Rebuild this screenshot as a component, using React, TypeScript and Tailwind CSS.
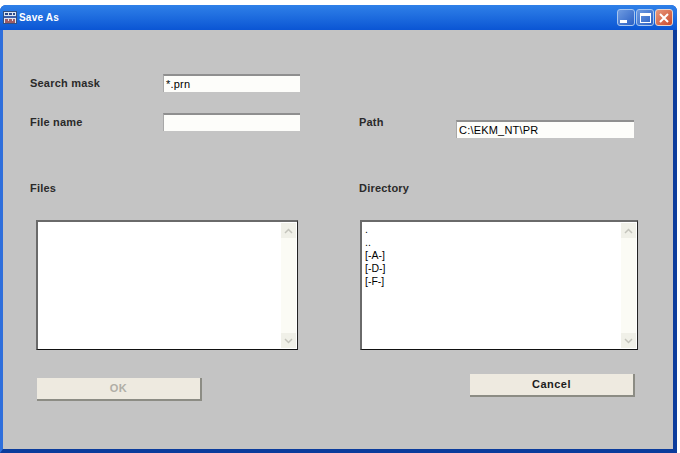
import React from "react";

const font = "font-['Liberation_Sans',Arial,sans-serif]";

const AppIcon = () => (
  <svg width="14" height="13" viewBox="0 0 14 13">
    <rect x="0.5" y="0.5" width="13" height="12" fill="#dfe6f2" stroke="#33507f" />
    <rect x="2" y="2" width="3" height="2" fill="#2a4a8c" />
    <rect x="6" y="2" width="3" height="2" fill="#2a4a8c" />
    <rect x="10" y="2" width="2" height="2" fill="#2a4a8c" />
    <rect x="1" y="5" width="12" height="2" fill="#3b5ea8" />
    <path d="M2 9h3M6 9h3M10 9h2M2 11h10" stroke="#8b2f3a" strokeWidth="1.4" />
  </svg>
);

const WinButton = ({ close, children }: { close?: boolean; children: React.ReactNode }) => (
  <div
    className={
      close
        ? "flex h-[17px] w-[18px] items-center justify-center rounded-[3px] border border-[#e9d6cc] bg-gradient-to-br from-[#e8977c] to-[#c9482a]"
        : "flex h-[17px] w-[18px] items-center justify-center rounded-[3px] border border-[#a9c6ee] bg-gradient-to-br from-[#6f9be0] to-[#2a5fc4]"
    }
  >
    {children}
  </div>
);

const TextBox = ({ value, className }: { value: string; className: string }) => (
  <div
    className={`flex h-[18px] items-center border-t-2 border-l border-t-[#8f8f8f] border-l-[#a8a8a8] bg-[#fdfdfa] pl-[2px] text-[11px] tracking-[0.2px] text-black ${className}`}
  >
    {value}
  </div>
);

const Chevron = ({ up }: { up?: boolean }) => (
  <div className="flex h-[15px] items-center justify-center bg-[#f0f0e8]">
    <svg width="9" height="6" viewBox="0 0 9 6">
      <path d={up ? "M1 5l3.5-3.5L8 5" : "M1 1l3.5 3.5L8 1"} fill="none" stroke="#c4c4bc" strokeWidth="1.5" />
    </svg>
  </div>
);

const ListBox = ({ items, className }: { items: string[]; className: string }) => (
  <div
    className={`flex h-[130px] border-t-2 border-r border-b border-l-2 border-t-[#6a6a6a] border-r-[#222222] border-b-[#111111] border-l-[#6a6a6a] bg-white ${className}`}
  >
    <div className="flex-1 pt-[1px] pl-[3px] text-[10.5px] leading-[13px] text-black">
      {items.map((item) => (
        <div key={item}>{item}</div>
      ))}
    </div>
    <div className="my-[1px] mr-[1px] flex w-[15px] flex-col justify-between bg-[#fbfbf5]">
      <Chevron up />
      <Chevron />
    </div>
  </div>
);

const Label = ({ children, className }: { children: React.ReactNode; className?: string }) => (
  <div className={`text-[11px] leading-[14px] font-bold tracking-[0.2px] text-[#2a2a2a] ${className ?? ""}`}>{children}</div>
);

const PushButton = ({ children, disabled, className }: { children: string; disabled?: boolean; className: string }) => (
  <div
    className={`flex h-[23px] w-[165px] items-center justify-center border-r-2 border-b-2 border-r-[#8c8c84] border-b-[#8c8c84] bg-[#eeeae0] text-[11px] font-bold tracking-[0.5px] ${
      disabled ? "text-[#b0aea6]" : "text-[#1c1c1c]"
    } ${className}`}
  >
    {children}
  </div>
);

export default function App() {
  return (
    <div className={`h-[453px] w-[680px] overflow-hidden bg-white pt-[5px] ${font}`}>
      <div className="flex h-[448px] w-[677px] flex-col rounded-t-[6px] bg-[#0a49c8]">
        <div className="flex h-[25px] shrink-0 items-center rounded-t-[6px] bg-gradient-to-b from-[#2f80e8] to-[#0a55d4] pr-[4px] pl-[3px]">
          <AppIcon />
          <span className="ml-[2px] text-[10px] font-bold tracking-[0.2px] text-white">Save As</span>
          <div className="ml-auto flex gap-[1px]">
            <WinButton>
              <div className="mt-[8px] mr-[5px] h-[3px] w-[7px] bg-white" />
            </WinButton>
            <WinButton>
              <div className="h-[10px] w-[11px] border border-t-[3px] border-white" />
            </WinButton>
            <WinButton close>
              <svg width="10" height="10" viewBox="0 0 10 10">
                <path d="M1 1l8 8M9 1l-8 8" stroke="#fff" strokeWidth="2" />
              </svg>
            </WinButton>
          </div>
        </div>
        <div className="flex flex-1 border-r-[4px] border-b-[4px] border-l-[3px] border-r-[#0b3c9c] border-b-[#0b3c9c] border-l-[#2f6fdc] bg-[#c4c4c4]">
          <div className="w-[329px] pt-[44px] pl-[27px]">
            <div className="flex items-center">
              <Label className="w-[133px]">Search mask</Label>
              <TextBox value="*.prn" className="w-[137px]" />
            </div>
            <div className="mt-[21px] flex items-center">
              <Label className="w-[133px]">File name</Label>
              <TextBox value="" className="w-[137px]" />
            </div>
            <Label className="mt-[50px]">Files</Label>
            <ListBox items={[]} className="mt-[25px] ml-[6px] w-[262px]" />
            <PushButton disabled className="mt-[28px] ml-[7px]">
              OK
            </PushButton>
          </div>
          <div className="flex-1 pt-[85px] pl-[27px]">
            <div className="flex">
              <Label className="w-[97px]">Path</Label>
              <TextBox value="C:\EKM_NT\PR" className="mt-[5px] w-[178px]" />
            </div>
            <Label className="mt-[43px]">Directory</Label>
            <ListBox items={[".", "..", "[-A-]", "[-D-]", "[-F-]"]} className="mt-[25px] ml-[1px] w-[278px]" />
            <PushButton className="mt-[24px] ml-[111px]">Cancel</PushButton>
          </div>
        </div>
      </div>
    </div>
  );
}
